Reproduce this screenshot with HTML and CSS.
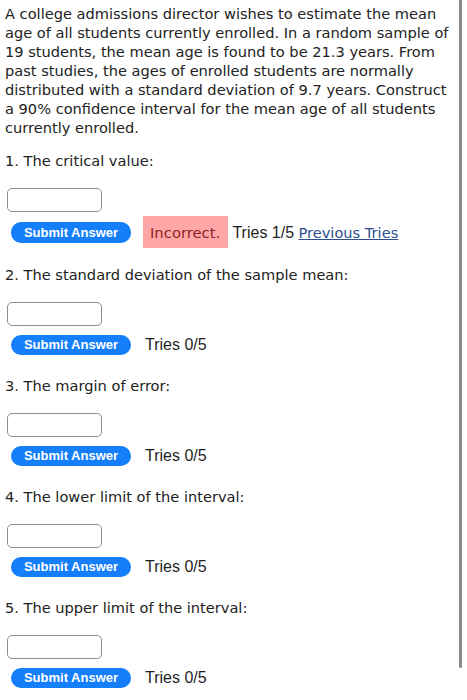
FILE: index.html
```html
<!DOCTYPE html>
<html>
<head>
<meta charset="utf-8">
<link rel="stylesheet" href="styles.css">
</head>
<body>
<div class="page">
  <p class="intro">A college admissions director wishes to estimate the mean age of all students currently enrolled. In a random sample of 19 students, the mean age is found to be 21.3 years. From past studies, the ages of enrolled students are normally distributed with a standard deviation of 9.7 years. Construct a 90% confidence interval for the mean age of all students currently enrolled.</p>

  <div class="part part-first">
    <div class="label">1. The critical value:</div>
    <input class="answer" type="text">
    <div class="row row-feedback"><button class="submit">Submit Answer</button><span class="incorrect">Incorrect.</span> <span class="tries">Tries 1/5</span> <a class="prev" href="#">Previous Tries</a></div>
  </div>

  <div class="part">
    <div class="label">2. The standard deviation of the sample mean:</div>
    <input class="answer" type="text">
    <div class="row"><button class="submit">Submit Answer</button><span class="tries">Tries 0/5</span></div>
  </div>

  <div class="part">
    <div class="label">3. The margin of error:</div>
    <input class="answer" type="text">
    <div class="row"><button class="submit">Submit Answer</button><span class="tries">Tries 0/5</span></div>
  </div>

  <div class="part">
    <div class="label">4. The lower limit of the interval:</div>
    <input class="answer" type="text">
    <div class="row"><button class="submit">Submit Answer</button><span class="tries">Tries 0/5</span></div>
  </div>

  <div class="part">
    <div class="label">5. The upper limit of the interval:</div>
    <input class="answer" type="text">
    <div class="row"><button class="submit">Submit Answer</button><span class="tries">Tries 0/5</span></div>
  </div>
</div>
<div class="scroll-thumb"></div>
</body>
</html>
```

FILE: styles.css
```css
html, body {
  margin: 0;
  padding: 0;
  background: #fff;
}

body {
  position: relative;
  height: 700px;
  overflow: hidden;
  font-family: "DejaVu Sans", Verdana, sans-serif;
  color: #222;
}

.page {
  padding: 4px 0 0 5px;
  width: 452px;
}

.intro {
  margin: 0;
  font-size: 14.6px;
  line-height: 19px;
}

.part {
  display: flex;
  flex-direction: column;
  align-items: flex-start;
  margin-top: 21px;
}

.part-first {
  margin-top: 14px;
}

.label {
  font-size: 14.6px;
  line-height: 19px;
}

.answer {
  box-sizing: border-box;
  margin: 18px 0 0 2px;
  width: 95px;
  height: 24px;
  border: 1px solid #8e8e8e;
  border-radius: 5px;
  padding: 0;
  background: #fff;
  outline: none;
}

.row {
  margin-top: 9px;
  height: 20px;
  line-height: 20px;
  white-space: nowrap;
  font-family: "Liberation Sans", Arial, sans-serif;
  font-size: 16px;
}

.row-feedback {
  margin-top: 10px;
  margin-bottom: 1px;
  height: 21px;
  line-height: 21px;
}

.submit {
  box-sizing: border-box;
  display: inline-block;
  vertical-align: top;
  margin: 0 14px 0 6px;
  width: 120px;
  height: 20px;
  padding: 0;
  border: none;
  border-radius: 10px;
  background: #157efb;
  color: #fff;
  font-family: "Liberation Sans", Arial, sans-serif;
  font-weight: bold;
  font-size: 13px;
  line-height: 20px;
  text-align: center;
}

.row-feedback .submit {
  height: 21px;
  line-height: 21px;
  margin-right: 12px;
}

.incorrect {
  background: #ffa6a6;
  color: #8f1f2a;
  font-family: "DejaVu Sans", Verdana, sans-serif;
  font-size: 14.8px;
  padding: 8px 8px 7px 7px;
}

.tries {
  color: #1f1f1f;
}

.prev {
  font-family: "DejaVu Sans", Verdana, sans-serif;
  font-size: 14.6px;
  color: #2d4f8e;
  text-decoration: underline;
}

.scroll-thumb {
  position: absolute;
  left: 459px;
  top: 0;
  width: 3px;
  height: 668px;
  background: #8a8a8a;
  border-radius: 0 0 2px 2px;
}
```
